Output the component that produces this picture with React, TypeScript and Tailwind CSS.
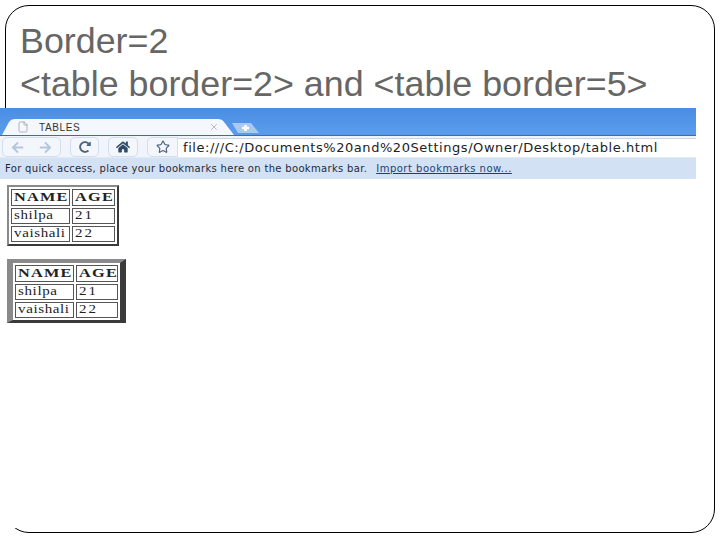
import React from 'react';
import { File, X, Star } from 'lucide-react';
import { FaArrowLeft, FaArrowRight, FaHome, FaRedoAlt } from 'react-icons/fa';

const CELL = 'border border-[#555] h-[16px] leading-none pl-[2px] pr-0 pt-0 pb-[2px] text-left';
const STRETCH = 'inline-block origin-left scale-x-[1.25]';

const BrowserTable: React.FC<{ sideEdge: number; topEdge: number; bottomEdge: number; className: string }> = ({
  sideEdge,
  topEdge,
  bottomEdge,
  className,
}) => (
  <div
    className={`${className} bg-white border-solid border-t-[#8a8a8a] border-l-[#8a8a8a] border-r-[#3a3a3a] border-b-[#3a3a3a]`}
    style={{
      borderLeftWidth: sideEdge,
      borderRightWidth: sideEdge,
      borderTopWidth: topEdge,
      borderBottomWidth: bottomEdge,
    }}
  >
    <table className="w-full border-separate border-spacing-[2px] font-['Liberation_Serif',serif] text-[12px] text-[#222]">
      <tbody>
        <tr>
          <th className={`${CELL} w-[59px] !h-[15px] font-bold text-[13px] tracking-[1px]`}>
            <span className={STRETCH}>NAME</span>
          </th>
          <th className={`${CELL} font-bold text-[13px] tracking-[1px]`}>
            <span className={STRETCH}>AGE</span>
          </th>
        </tr>
        <tr>
          <td className={`${CELL} tracking-[0.5px]`}>
            <span className={STRETCH}>shilpa</span>
          </td>
          <td className={`${CELL} tracking-[1.5px]`}>
            <span className={STRETCH}>21</span>
          </td>
        </tr>
        <tr>
          <td className={`${CELL} tracking-[0.5px]`}>
            <span className={STRETCH}>vaishali</span>
          </td>
          <td className={`${CELL} tracking-[1.5px]`}>
            <span className={STRETCH}>22</span>
          </td>
        </tr>
      </tbody>
    </table>
  </div>
);

const NavButton: React.FC<{ width: string; children: React.ReactNode }> = ({ width, children }) => (
  <div className={`${width} h-[20px] flex items-center justify-around border border-[#d3deec] rounded-[5px] bg-[#f3f6fb]`}>
    {children}
  </div>
);

export default function App() {
  return (
    <div className="w-[720px] h-[540px] bg-white overflow-hidden pt-[5px] pl-[5px] font-['Liberation_Sans',sans-serif]">
      <div className="w-[710px] h-[528px] border-[1.5px] border-black rounded-[24px]">
        <div className="pl-[14px] pt-[14px] text-[35.85px] leading-[43px] text-[#666]">
          <p>Border=2</p>
          <p>&lt;table border=2&gt; and &lt;table border=5&gt;</p>
        </div>

        {/* pasted screenshot sits over the left edge of the frame */}
        <div className="relative -ml-[7px] mt-[2px] w-[697px] h-[420px] bg-white">
          <div className="h-[28px] bg-gradient-to-b from-[#4a8ee4] to-[#5a9cec] border-b border-[#3a6ea8] flex items-end">
            <div className="relative ml-[3px] w-[232px] h-[16px] flex items-center pl-[15px] text-[10px] text-[#333]">
              <svg className="absolute inset-0" width="232" height="16" viewBox="0 0 232 16">
                <path d="M0 16 L7 3 Q9 0 13 0 L216 0 Q220 0 222 3 L232 16 Z" fill="#f4f7fc" />
              </svg>
              <File size={12} strokeWidth={1} className="relative text-[#777]" />
              <span className="relative ml-[10px] w-[170px] tracking-[0.6px]">TABLES</span>
              <X size={10} strokeWidth={2} className="relative text-[#b0b0b0]" />
            </div>
            <svg className="mb-[2px] -ml-[2px]" width="27" height="10" viewBox="0 0 27 10">
              <path d="M0 0 L19 0 L27 10 L6 10 Z" fill="#a9c9ee" />
              <path d="M10 5 L17 5 M13.5 2 L13.5 8" stroke="#fff" strokeWidth="2.5" />
            </svg>
          </div>
          <div className="h-[22px] bg-[#f1f5fb] border-b border-[#e3eaf4] flex items-end pl-[3px] gap-[9px]">
            <NavButton width="w-[59px]">
              <FaArrowLeft size={13} className="text-[#b4c6dc]" />
              <FaArrowRight size={13} className="text-[#b4c6dc]" />
            </NavButton>
            <NavButton width="w-[29px]">
              <FaRedoAlt size={12} className="text-[#50647c]" />
            </NavButton>
            <NavButton width="w-[30px]">
              <FaHome size={14} className="text-[#2e4a68]" />
            </NavButton>
            <div className="w-[31px] h-[20px] flex items-center justify-center border border-[#d3deec] rounded-l-[5px] bg-[#f3f6fb]">
              <Star size={14} strokeWidth={2} className="text-[#50647c]" />
            </div>
            <div className="-ml-[9px] flex-1 h-[19px] bg-white border-t border-[#c6d5e8] pl-[5px] font-['DejaVu_Sans',sans-serif] text-[13px] leading-[18px] text-[#222] tracking-[0.55px] whitespace-nowrap">
              file:///C:/Documents%20and%20Settings/Owner/Desktop/table.html
            </div>
          </div>
          <div className="h-[21px] bg-[#d3e1f4] pl-[6px] font-['DejaVu_Sans',sans-serif] text-[10px] leading-[21px] text-[#1f2a38] tracking-[0.32px] whitespace-nowrap">
            For quick access, place your bookmarks here on the bookmarks bar.
            <a className="ml-[9px] underline text-[#1c3f7a] tracking-[0.5px]">Import bookmarks now...</a>
          </div>

          <div className="pl-[7.5px] pt-[6px]">
            <BrowserTable sideEdge={2} topEdge={2} bottomEdge={2} className="w-[112px]" />
            <BrowserTable sideEdge={6} topEdge={4} bottomEdge={3} className="w-[119px] mt-[13px]" />
          </div>
        </div>
      </div>
    </div>
  );
}
